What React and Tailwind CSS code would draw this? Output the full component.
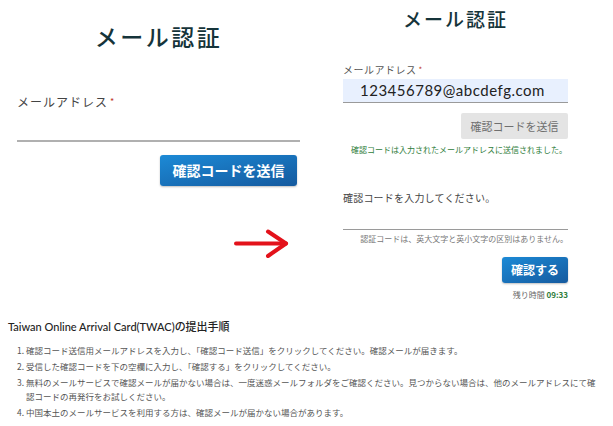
import React from "react";

const JP = { fontFamily: '"Noto Sans CJK JP", "Noto Sans", sans-serif' };

export default function App() {
  const items = [
    ["1.", <>確認コード送信用メールアドレスを入力し、「確認コード送信」をクリックしてください。確認メールが届きます。</>],
    ["2.", <>受信した確認コードを下の空欄に入力し、「確認する」をクリックしてください。</>],
    ["3.", <>無料のメールサービスで確認メールが届かない場合は、一度迷惑メールフォルダをご確認ください。見つからない場合は、他のメールアドレスにて確<br />認コードの再発行をお試しください。</>],
    ["4.", <>中国本土のメールサービスを利用する方は、確認メールが届かない場合があります。</>],
  ];
  return (
    <div className="w-[613px] h-[426px] bg-white overflow-hidden" style={JP}>
      <div className="flex h-[305px]">
        {/* Left panel */}
        <div className="w-[300px] pl-[17px] flex flex-col">
          <div className="mt-[22px] text-[23px] leading-[28px] tracking-[2.5px] text-center text-[#15343a] font-medium">
            メール認証
          </div>
          <div className="mt-[44px] text-[12px] leading-[16px] tracking-[1px] text-[#444]">
            メールアドレス<span className="ml-[2px] text-[#c0392b] text-[9px] align-top">*</span>
          </div>
          <div className="h-[32px] border-b-[2px] border-[#b0b0b0]" />
          <div className="mt-[13px] self-end mr-[3px] w-[137px] h-[31px] rounded-[3px] bg-gradient-to-br from-[#1c8ad6] to-[#155a9f] shadow-[0_1px_2px_rgba(0,0,0,0.25)] flex items-center justify-center text-white text-[14px] font-bold">
            確認コードを送信
          </div>
          <div className="mt-[43px] self-end mr-[10px]">
            <svg width="56" height="30" viewBox="0 0 56 30">
              <path d="M2 14.5 H52" stroke="#e3121b" strokeWidth="4" strokeLinecap="round" fill="none" />
              <path d="M34 2.5 L52 14.5 L34 27" stroke="#e3121b" strokeWidth="4" strokeLinecap="round" strokeLinejoin="round" fill="none" />
            </svg>
          </div>
        </div>

        {/* Right panel */}
        <div className="pl-[43px] w-[268px] flex flex-col">
          <div className="mt-[7px] text-[19px] leading-[24px] tracking-[2px] text-center text-[#15343a] font-medium">
            メール認証
          </div>
          <div className="mt-[32px] text-[10px] leading-[14px] tracking-[0.5px] text-[#555]">
            メールアドレス<span className="ml-[2px] text-[#c0392b] text-[8px] align-top">*</span>
          </div>
          <div className="mt-[2px] h-[24px] bg-[#e8f0fe] border-b border-[#9a9a9a] pl-[17px] flex items-center text-[15px] tracking-[0.5px] text-[#222]" style={{ fontFamily: '"Lato", "Noto Sans", sans-serif' }}>
            123456789@abcdefg.com
          </div>
          <div className="mt-[10px] self-end w-[107px] h-[26px] rounded-[2px] bg-[#e4e4e4] flex items-center justify-center text-[11px] text-[#6f6f6f]">
            確認コードを送信
          </div>
          <div className="mt-[5px] text-right text-[8px] leading-[12px] text-[#2e7d3a] pr-[1px]">
            確認コードは入力されたメールアドレスに送信されました。
          </div>
          <div className="mt-[35px] text-[10px] leading-[14px] tracking-[0.2px] text-[#444]">
            確認コードを入力してください。
          </div>
          <div className="h-[25px] border-b border-[#9a9a9a]" />
          <div className="mt-[3px] text-right text-[8px] leading-[12px] text-[#777]">
            認証コードは、英大文字と英小文字の区別はありません。
          </div>
          <div className="mt-[12px] self-end w-[66px] h-[26px] rounded-[3px] bg-gradient-to-br from-[#1c8ad6] to-[#155a9f] shadow-[0_1px_2px_rgba(0,0,0,0.25)] flex items-center justify-center text-white text-[12px] font-bold">
            確認する
          </div>
          <div className="mt-[7px] text-right text-[8px] leading-[10px] text-[#666]">
            残り時間 <span className="font-bold text-[#2e7d3a]">09:33</span>
          </div>
        </div>
      </div>

      {/* Bottom */}
      <div className="pl-[8px]">
        <div className="mt-[13px] text-[11px] leading-[16px] text-[#222] font-medium">
          <span style={{ fontFamily: '"Lato", "Noto Sans", sans-serif' }}>Taiwan Online Arrival Card(TWAC)</span>の提出手順
        </div>
        <div className="mt-[8px] pl-[9px] flex flex-col gap-[2px]">
          {items.map(([n, t]) => (
            <div key={n} className="flex text-[8.5px] leading-[14px] text-[#555]">
              <span className="w-[9px] shrink-0">{n}</span>
              <span className="whitespace-nowrap">{t}</span>
            </div>
          ))}
        </div>
      </div>
    </div>
  );
}
